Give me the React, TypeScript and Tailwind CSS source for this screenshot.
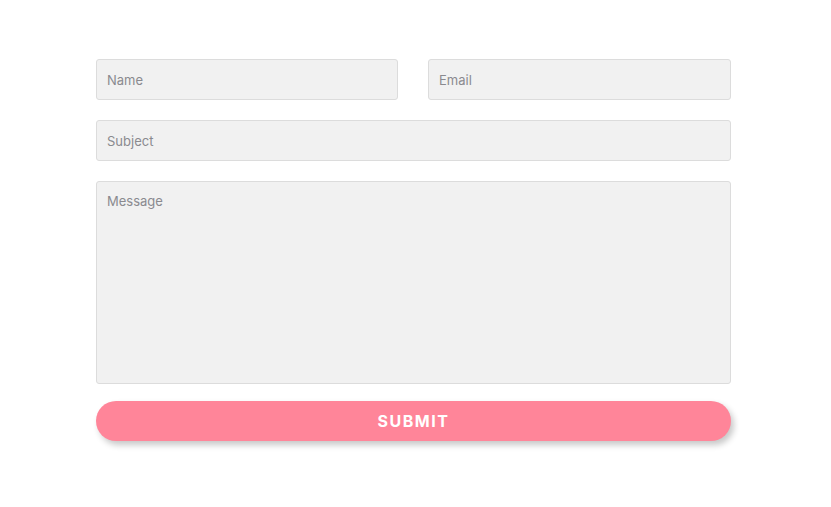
import React from 'react';

const field =
  'w-full h-[41px] px-[10px] bg-[#f1f1f1] border border-[#dcdcdc] rounded-[3px] text-[13px] text-[#555] placeholder:text-[#8a8a8f] outline-none';

export default function App() {
  return (
    <div className="min-h-[507px] bg-white font-['Inter','Noto_Sans',sans-serif]">
      <form className="ml-[96px] w-[635px] pt-[59px] flex flex-col" onSubmit={(e) => e.preventDefault()}>
        <div className="grid grid-cols-[302px_303px] gap-[30px]">
          <input className={field} placeholder="Name" />
          <input className={field} placeholder="Email" />
        </div>
        <input className={`${field} mt-[20px]`} placeholder="Subject" />
        <textarea
          className="mt-[20px] w-full h-[203px] px-[10px] py-[10px] bg-[#f1f1f1] border border-[#dcdcdc] rounded-[3px] text-[13px] text-[#555] placeholder:text-[#8a8a8f] outline-none resize-none"
          placeholder="Message"
        />
        <button
          type="submit"
          className="mt-[17px] h-[40px] w-full rounded-full bg-[#ff8599] text-white text-[16px] font-bold tracking-[1.5px] shadow-[3px_4px_6px_rgba(0,0,0,0.22)]"
        >
          SUBMIT
        </button>
      </form>
    </div>
  );
}
